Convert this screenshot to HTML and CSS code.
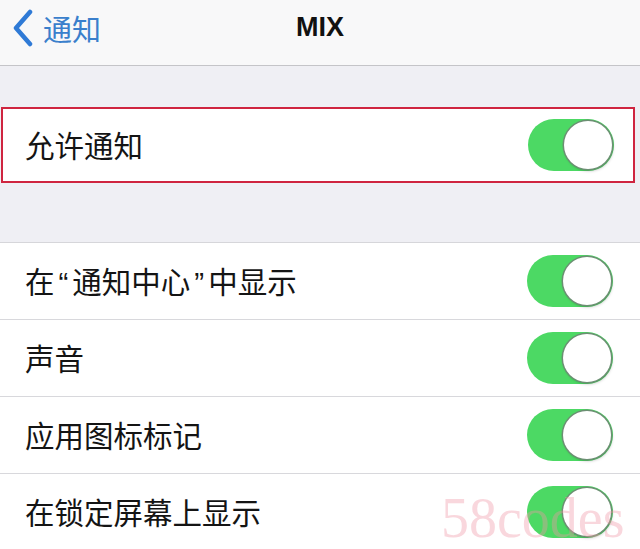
FILE: index.html
```html
<!DOCTYPE html>
<html lang="zh-CN">
<head>
    <meta charset="UTF-8">
    <title>MIX</title>
    <link rel="stylesheet" href="styles.css">
</head>
<body>
    <div class="nav">
        <div class="back">
            <svg width="22" height="38" viewBox="0 0 22 38">
                <path d="M19 3 L5 19 L19 35" fill="none" stroke="#2f7ad6" stroke-width="4.5" stroke-linecap="round" stroke-linejoin="round"/>
            </svg>
            <span>通知</span>
        </div>
        <div class="title">MIX</div>
    </div>

    <div class="gap-top"></div>

    <div class="row allow">
        <span class="label">允许通知</span>
        <div class="toggle"><div class="knob"></div></div>
    </div>

    <div class="gap-mid"></div>

    <div class="group">
        <div class="row">
            <span class="label">在<span class="quote">“</span>通知中心<span class="quote">”</span>中显示</span>
            <div class="toggle"><div class="knob"></div></div>
        </div>
        <div class="row">
            <span class="label">声音</span>
            <div class="toggle"><div class="knob"></div></div>
        </div>
        <div class="row">
            <span class="label">应用图标标记</span>
            <div class="toggle"><div class="knob"></div></div>
        </div>
        <div class="row">
            <span class="label">在锁定屏幕上显示</span>
            <div class="toggle"><div class="knob"></div></div>
        </div>
    </div>

    <div class="watermark">58codes</div>
</body>
</html>
```

FILE: styles.css
```css
body {
    margin: 0;
    width: 640px;
    height: 549px;
    overflow: hidden;
    position: relative;
    background-color: #efeff4;
    font-family: "Noto Sans CJK SC", "Noto Sans", sans-serif;
    color: #141414;
}

.nav {
    height: 65px;
    background-color: #f8f8f9;
    border-bottom: 1px solid #c4c4c8;
    display: flex;
    align-items: center;
    position: relative;
}

.back {
    display: flex;
    align-items: center;
    gap: 10px;
    padding-left: 11px;
    color: #3a7fcc;
    font-size: 29px;
    margin-top: -9px;
}

.title {
    position: absolute;
    left: 0;
    right: 0;
    top: 12px;
    text-align: center;
    font-family: "Liberation Sans", Arial, sans-serif;
    font-weight: bold;
    font-size: 27px;
    color: #111;
}

.gap-top {
    height: 41px;
}

.gap-mid {
    height: 59px;
    border-bottom: 1px solid #d6d6da;
}

.row {
    height: 76px;
    display: flex;
    align-items: center;
    justify-content: space-between;
    background-color: #fff;
    padding-left: 25px;
    position: relative;
}

.row + .row {
    border-top: 1px solid #d8d8dc;
}

.allow {
    height: 72px;
    margin: 0 5px 0 1px;
    padding-left: 22px;
    border: 2px solid #cf2540;
}

.allow .toggle {
    margin-right: 19px;
}

.label {
    font-size: 29.5px;
    margin-top: -2px;
}

.quote {
    font-family: "Liberation Sans", Arial, sans-serif;
    margin: 0 4px;
}

.toggle {
    width: 86px;
    height: 52px;
    border-radius: 26px;
    background-color: #4cd964;
    margin-right: 27px;
    display: flex;
    align-items: center;
    justify-content: flex-end;
    padding-right: 2px;
    box-sizing: border-box;
}

.knob {
    width: 48px;
    height: 48px;
    border-radius: 50%;
    background-color: #fff;
    box-shadow: 0 0 0 1.5px #6b8f72, 1px 2px 3px rgba(0, 0, 0, 0.25);
}

.watermark {
    position: absolute;
    left: 441px;
    top: 494px;
    font-family: "Liberation Serif", serif;
    font-size: 56px;
    line-height: 48px;
    color: rgba(238, 150, 165, 0.38);
}
```
